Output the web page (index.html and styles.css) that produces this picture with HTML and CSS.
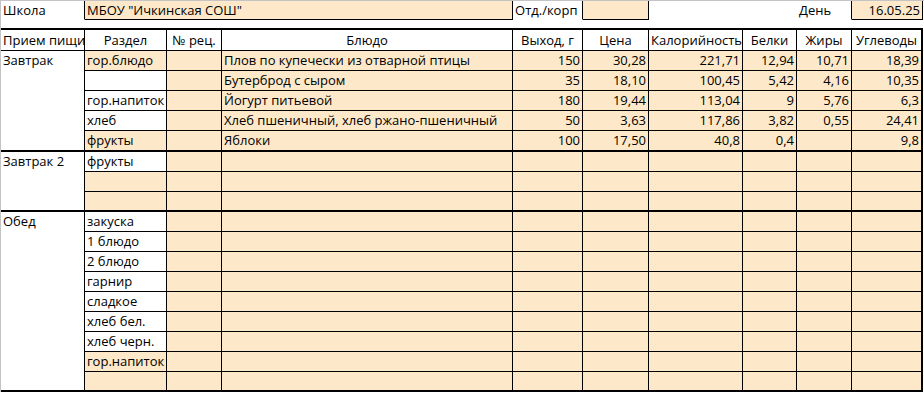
FILE: index.html
```html
<!DOCTYPE html>
<html lang="ru">
<head>
<meta charset="utf-8">
<title>Меню</title>
<link rel="stylesheet" href="styles.css">
</head>
<body>
<div class="frame">
<table class="sheet">
  <colgroup>
    <col class="w-a"><col class="w-b"><col class="w-c"><col class="w-d"><col class="w-e">
    <col class="w-f"><col class="w-g"><col class="w-h"><col class="w-i"><col class="w-j">
  </colgroup>
  <tbody>
    <tr class="info">
      <td class="i-label">Школа</td>
      <td class="o i-box" colspan="3">МБОУ "Ичкинская СОШ"</td>
      <td class="i-side">Отд./корп</td>
      <td class="o i-box"></td>
      <td class="i-none"></td>
      <td class="i-none"></td>
      <td class="i-side">День</td>
      <td class="o i-box r">16.05.25</td>
    </tr>
    <tr class="gap"><td colspan="10"></td></tr>
    <tr class="head">
      <td>Прием пищи</td>
      <td class="c">Раздел</td>
      <td class="c">№ рец.</td>
      <td class="c">Блюдо</td>
      <td class="c">Выход, г</td>
      <td class="c">Цена</td>
      <td class="c">Калорийность</td>
      <td class="c">Белки</td>
      <td class="c">Жиры</td>
      <td class="c">Углеводы</td>
    </tr>

    <tr>
      <td class="meal end" rowspan="5">Завтрак</td>
      <td class="o">гор.блюдо</td><td class="o"></td>
      <td class="o">Плов по купечески из отварной птицы</td>
      <td class="o r">150</td><td class="o r">30,28</td><td class="o r">221,71</td>
      <td class="o r">12,94</td><td class="o r">10,71</td><td class="o r">18,39</td>
    </tr>
    <tr>
      <td></td><td class="o"></td>
      <td class="o">Бутерброд с сыром</td>
      <td class="o r">35</td><td class="o r">18,10</td><td class="o r">100,45</td>
      <td class="o r">5,42</td><td class="o r">4,16</td><td class="o r">10,35</td>
    </tr>
    <tr>
      <td>гор.напиток</td><td class="o"></td>
      <td class="o">Йогурт питьевой</td>
      <td class="o r">180</td><td class="o r">19,44</td><td class="o r">113,04</td>
      <td class="o r">9</td><td class="o r">5,76</td><td class="o r">6,3</td>
    </tr>
    <tr>
      <td>хлеб</td><td class="o"></td>
      <td class="o">Хлеб пшеничный, хлеб ржано-пшеничный</td>
      <td class="o r">50</td><td class="o r">3,63</td><td class="o r">117,86</td>
      <td class="o r">3,82</td><td class="o r">0,55</td><td class="o r">24,41</td>
    </tr>
    <tr class="end">
      <td class="o">фрукты</td><td class="o"></td>
      <td class="o">Яблоки</td>
      <td class="o r">100</td><td class="o r">17,50</td><td class="o r">40,8</td>
      <td class="o r">0,4</td><td class="o r"></td><td class="o r">9,8</td>
    </tr>

    <tr>
      <td class="meal end" rowspan="3">Завтрак 2</td>
      <td>фрукты</td><td class="o"></td><td class="o"></td><td class="o"></td><td class="o"></td>
      <td class="o"></td><td class="o"></td><td class="o"></td><td class="o"></td>
    </tr>
    <tr>
      <td class="o"></td><td class="o"></td><td class="o"></td><td class="o"></td><td class="o"></td>
      <td class="o"></td><td class="o"></td><td class="o"></td><td class="o"></td>
    </tr>
    <tr class="end">
      <td class="o"></td><td class="o"></td><td class="o"></td><td class="o"></td><td class="o"></td>
      <td class="o"></td><td class="o"></td><td class="o"></td><td class="o"></td>
    </tr>

    <tr>
      <td class="meal end" rowspan="9">Обед</td>
      <td>закуска</td><td class="o"></td><td class="o"></td><td class="o"></td><td class="o"></td>
      <td class="o"></td><td class="o"></td><td class="o"></td><td class="o"></td>
    </tr>
    <tr>
      <td>1 блюдо</td><td class="o"></td><td class="o"></td><td class="o"></td><td class="o"></td>
      <td class="o"></td><td class="o"></td><td class="o"></td><td class="o"></td>
    </tr>
    <tr>
      <td>2 блюдо</td><td class="o"></td><td class="o"></td><td class="o"></td><td class="o"></td>
      <td class="o"></td><td class="o"></td><td class="o"></td><td class="o"></td>
    </tr>
    <tr>
      <td>гарнир</td><td class="o"></td><td class="o"></td><td class="o"></td><td class="o"></td>
      <td class="o"></td><td class="o"></td><td class="o"></td><td class="o"></td>
    </tr>
    <tr>
      <td>сладкое</td><td class="o"></td><td class="o"></td><td class="o"></td><td class="o"></td>
      <td class="o"></td><td class="o"></td><td class="o"></td><td class="o"></td>
    </tr>
    <tr>
      <td>хлеб бел.</td><td class="o"></td><td class="o"></td><td class="o"></td><td class="o"></td>
      <td class="o"></td><td class="o"></td><td class="o"></td><td class="o"></td>
    </tr>
    <tr>
      <td>хлеб черн.</td><td class="o"></td><td class="o"></td><td class="o"></td><td class="o"></td>
      <td class="o"></td><td class="o"></td><td class="o"></td><td class="o"></td>
    </tr>
    <tr>
      <td class="o">гор.напиток</td><td class="o"></td><td class="o"></td><td class="o"></td><td class="o"></td>
      <td class="o"></td><td class="o"></td><td class="o"></td><td class="o"></td>
    </tr>
    <tr class="end">
      <td class="o"></td><td class="o"></td><td class="o"></td><td class="o"></td><td class="o"></td>
      <td class="o"></td><td class="o"></td><td class="o"></td><td class="o"></td>
    </tr>
  </tbody>
</table>
</div>
</body>
</html>
```

FILE: styles.css
```css
html, body {
  margin: 0;
  padding: 0;
  background: #ffffff;
}

.frame {
  width: 924px;
  height: 394px;
  border-top: 1px solid #c4c4c4;
  box-sizing: border-box;
  overflow: hidden;
}

.sheet {
  table-layout: fixed;
  border-collapse: separate;
  border-spacing: 0;
  width: 923px;
  border-left: 1px solid #c4c4c4;
  font-family: "Open Sans", "Liberation Sans", sans-serif;
  font-size: 13px;
  color: #000;
}

.w-a { width: 84px; }
.w-b { width: 82px; }
.w-c { width: 55px; }
.w-d { width: 291px; }
.w-e { width: 70px; }
.w-f { width: 66px; }
.w-g { width: 94px; }
.w-h { width: 54px; }
.w-i { width: 55px; }
.w-j { width: 71px; }

.sheet td {
  box-sizing: border-box;
  height: 20px;
  padding: 0 2px;
  line-height: 19px;
  white-space: nowrap;
  overflow: hidden;
  vertical-align: bottom;
  border-right: 1px solid #000;
  border-bottom: 1px solid #000;
  background: #fff;
}

.sheet td:last-child {
  border-right-width: 2px;
}

.sheet td.o { background: #fde9c9; }
.sheet td.r { text-align: right; padding-right: 2px; }
.sheet td.c { text-align: center; }

/* info row */
.info td {
  height: 19px;
  line-height: 18px;
  border-bottom-color: transparent;
  border-right-color: transparent;
}
.info td.i-label { border-right-color: #000; }
.info td.i-box {
  border-right-color: #000;
  border-bottom-color: #000;
}
.info td.i-side { border-right-color: #000; }
.info td:last-child { border-right-width: 1px; }

.gap td {
  height: 8px;
  line-height: 8px;
  border: 0;
  padding: 0;
}

/* header row */
.head td {
  height: 23px;
  line-height: 20px;
  border-top: 2px solid #000;
}

/* meal name column */
.sheet td.meal {
  vertical-align: top;
  height: auto;
}

.end td,
.sheet td.end {
  border-bottom-width: 2px;
}
```
